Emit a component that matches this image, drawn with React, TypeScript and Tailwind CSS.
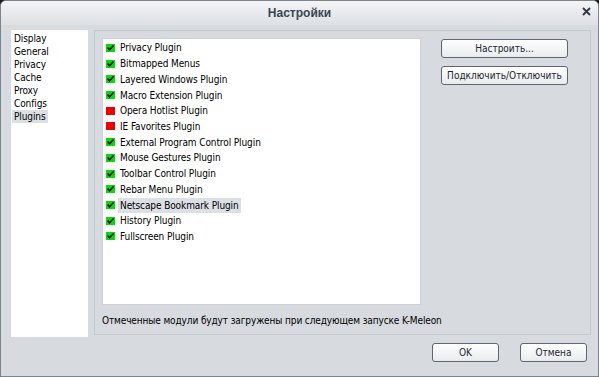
import React from "react";

const plugins: { name: string; on: boolean; sel?: boolean }[] = [
  { name: "Privacy Plugin", on: true },
  { name: "Bitmapped Menus", on: true },
  { name: "Layered Windows Plugin", on: true },
  { name: "Macro Extension Plugin", on: true },
  { name: "Opera Hotlist Plugin", on: false },
  { name: "IE Favorites Plugin", on: false },
  { name: "External Program Control Plugin", on: true },
  { name: "Mouse Gestures Plugin", on: true },
  { name: "Toolbar Control Plugin", on: true },
  { name: "Rebar Menu Plugin", on: true },
  { name: "Netscape Bookmark Plugin", on: true, sel: true },
  { name: "History Plugin", on: true },
  { name: "Fullscreen Plugin", on: true },
];

const cats = ["Display", "General", "Privacy", "Cache", "Proxy", "Configs", "Plugins"];

function Check({ on }: { on: boolean }) {
  if (!on) return <div className="w-[9px] h-[8px] bg-[#f00000] shrink-0" />;
  return (
    <div className="w-[9px] h-[8px] bg-[#00e000] shrink-0 relative">
      <svg width="9" height="8" viewBox="0 0 9 8" className="absolute left-0 top-0">
        <path d="M1.5 3.5 L3.5 5.8 L7.5 1.5" stroke="#000" strokeWidth="1.6" fill="none" />
      </svg>
    </div>
  );
}

function Btn({ children, w }: { children: React.ReactNode; w: string }) {
  return (
    <div
      className={`${w} h-[19px] flex items-center justify-center rounded-[3px] border border-[#5d6772] bg-gradient-to-b from-white to-[#e9ebee] text-[#1d2631] text-[10px] leading-none`}
    >
      {children}
    </div>
  );
}

export default function App() {
  return (
    <div
      className="w-[599px] h-[377px] bg-[#1a1a1a]"
      style={{ fontFamily: '"DejaVu Sans Condensed", "Liberation Sans", Arial, sans-serif' }}
    >
      <div className="w-[599px] h-[377px] flex flex-col rounded-t-[6px] border border-[#7c858e] bg-[#d7dbdf] overflow-hidden">
        <div className="h-[24px] shrink-0 relative flex items-center justify-center bg-gradient-to-b from-[#f3f4f6] to-[#dde0e4]">
          <span
            className="text-[12px] font-bold text-[#3b4653]"
            style={{ fontFamily: '"Liberation Sans", Arial, sans-serif' }}
          >
            Настройки
          </span>
          <span className="absolute right-[6px] top-[5px] text-[#2e3742]">
            <svg width="11" height="11" viewBox="0 0 11 11">
              <path d="M2 2 L9 9 M9 2 L2 9" stroke="#2e3742" strokeWidth="1.8" />
            </svg>
          </span>
        </div>
        <div className="flex pl-[10px] pt-[5px] gap-[6px]">
          <div className="w-[77px] h-[307px] bg-white pt-[2px] pl-[1px]">
            {cats.map((c) => (
              <div key={c} className="h-[13px] flex items-center">
                <span
                  className={`px-[2px] h-[13px] leading-[13px] text-[10px] text-black tracking-[-0.1px] ${
                    c === "Plugins" ? "bg-[#dbe0e5]" : ""
                  }`}
                >
                  {c}
                </span>
              </div>
            ))}
          </div>
          <div className="w-[497px] h-[305px] border border-[#c4c9ce] flex flex-col">
            <div className="flex pl-[7px] pt-[7px]">
              <div className="w-[319px] h-[267px] bg-white border border-[#cdd1d5] pt-[1px]">
                {plugins.map((p) => (
                  <div key={p.name} className="h-[15.72px] flex items-center pl-[3px]">
                    <Check on={p.on} />
                    <span
                      className={`ml-[3px] px-[2px] h-[15px] leading-[15px] text-[10px] text-black tracking-[-0.1px] ${
                        p.sel ? "bg-[#dbe0e5]" : ""
                      }`}
                    >
                      {p.name}
                    </span>
                  </div>
                ))}
              </div>
              <div className="ml-[20px] pt-[1px] flex flex-col gap-[8px]">
                <Btn w="w-[127px]">Настроить...</Btn>
                <Btn w="w-[127px]">Подключить/Отключить</Btn>
              </div>
            </div>
            <div className="pl-[7px] mt-[9px] text-[10px] leading-[13px] text-black tracking-[-0.12px]">
              Отмеченные модули будут загружены при следующем запуске K-Meleon
            </div>
          </div>
        </div>
        <div className="flex justify-end gap-[21px] pr-[11px] pt-[6px]">
          <Btn w="w-[67px]">OK</Btn>
          <Btn w="w-[67px]">Отмена</Btn>
        </div>
      </div>
    </div>
  );
}
